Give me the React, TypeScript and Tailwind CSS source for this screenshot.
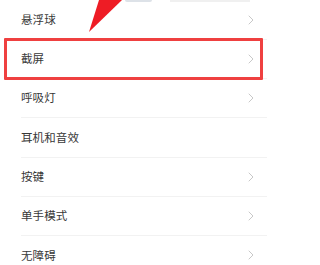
import React from "react";

const items: { label: string; chevron: boolean }[] = [
  { label: "悬浮球", chevron: true },
  { label: "截屏", chevron: true },
  { label: "呼吸灯", chevron: true },
  { label: "耳机和音效", chevron: false },
  { label: "按键", chevron: true },
  { label: "单手模式", chevron: true },
  { label: "无障碍", chevron: true },
];

function Chevron() {
  return (
    <svg width="6" height="10" viewBox="0 0 6 10" className="shrink-0">
      <path d="M1 1 L5 5 L1 9" fill="none" stroke="#c8c8c8" strokeWidth="1" strokeLinecap="round" strokeLinejoin="round" />
    </svg>
  );
}

export default function App() {
  return (
    <div
      className="relative w-[267px] h-[265px] overflow-hidden bg-white"
      style={{ fontFamily: '"Noto Sans CJK SC", "Noto Sans", sans-serif' }}
    >
      <div className="flex flex-col pt-[0.5px]">
        {items.map((it, i) => (
          <div key={i} className="flex h-[39.3px] pl-[21px]">
            <div className="flex flex-1 items-center justify-between pr-[13px] border-b border-[#f2f2f2]">
              <span className="text-[11.5px] leading-none text-[#383838] tracking-[0.1px]">{it.label}</span>
              {it.chevron && <Chevron />}
            </div>
          </div>
        ))}
      </div>

      {/* faint remnants of previous row at top */}
      <div className="absolute left-[125px] top-0 h-[2px] w-[27px] rounded-b-sm bg-[#dde2e8]" />
      <div className="absolute left-[170px] top-0 h-[2px] w-[80px] bg-[#f0f0f0]" />

      {/* red highlight box */}
      <div className="absolute left-[4px] top-[38px] w-[259px] h-[42px] border-[3px] border-[#ef4040] rounded-[1px]" />

      {/* red arrow */}
      <svg className="absolute left-0 top-0" width="267" height="40" viewBox="0 0 267 40">
        <polygon points="89,32 99,0 122,0" fill="#ee1c25" />
      </svg>
    </div>
  );
}
